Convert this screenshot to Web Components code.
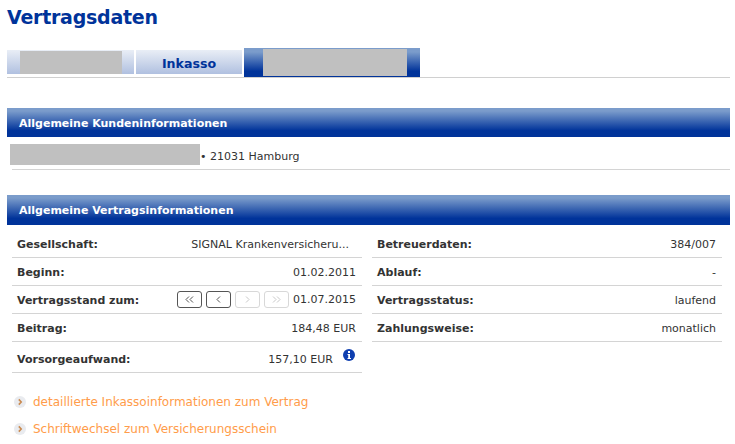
<!DOCTYPE html>
<html lang="de">
<head>
<meta charset="utf-8">
<title>Vertragsdaten</title>
<style>
    html, body { margin: 0; background: #fff; }
    body { font: 11px "DejaVu Sans", Verdana, sans-serif; color: #333; overflow: hidden; height: 444px; }
</style>
</head>
<body>
<template id="contract_page_tpl">
  <style>
      :host { display: block; padding: 0 5px 0 7px; }
      h1 { margin: 0; font-size: 19px; letter-spacing: -.25px; line-height: 24px; padding-top: 5px; color: #00339a; font-weight: bold; }
      .tabs { display: flex; align-items: flex-end; gap: 2px; height: 29px; margin-top: 19px; border-bottom: 1px solid #d0d0d0; }
      .columns { display: grid; grid-template-columns: 350px 350px; gap: 10px; padding: 5px 0 0 5px; }
      .address { display: flex; align-items: flex-start; box-sizing: border-box; height: 33px; padding-top: 7px; margin-left: 5px; border-bottom: 1px solid #d4d4d4; }
      .address .mask { width: 190px; height: 21px; background: #c0c0c0; margin-left: -2px; }
      .address .text { margin-top: 6px; }
      section-bar { margin-top: 30px; }
      section-bar.second { margin-top: 25px; height: 30px; }
      .links { padding-top: 15px; }
  </style>
  <h1>Vertragsdaten</h1>
  <div class="tabs">
    <tab-item style="width:127px" masked="102"></tab-item>
    <tab-item style="width:106px">Inkasso</tab-item>
    <tab-item style="width:176px" active masked="144"></tab-item>
  </div>
  <section-bar>Allgemeine Kundeninformationen</section-bar>
  <div class="address"><span class="mask"></span><span class="text">&bull; 21031 Hamburg</span></div>
  <section-bar class="second">Allgemeine Vertragsinformationen</section-bar>
  <div class="columns">
    <div>
      <info-row label="Gesellschaft:"><span style="padding-right:7px">SIGNAL Krankenversicheru...</span></info-row>
      <info-row label="Beginn:">01.02.2011</info-row>
      <info-row label="Vertragsstand zum:"><date-stepper></date-stepper><span style="margin-top:-3px">01.07.2015</span></info-row>
      <info-row label="Beitrag:">184,48 EUR</info-row>
      <info-row label="Vorsorgeaufwand:" tall>157,10 EUR<info-icon></info-icon></info-row>
    </div>
    <div>
      <info-row label="Betreuerdaten:">384/007</info-row>
      <info-row label="Ablauf:">-</info-row>
      <info-row label="Vertragsstatus:">laufend</info-row>
      <info-row label="Zahlungsweise:">monatlich</info-row>
    </div>
  </div>
  <div class="links">
    <more-link>detaillierte Inkassoinformationen zum Vertrag</more-link>
    <more-link>Schriftwechsel zum Versicherungsschein</more-link>
  </div>
</template>

<template id="tab_item_tpl">
  <style>
      :host { display: flex; box-sizing: border-box; height: 24px; margin-bottom: 3px; justify-content: center; align-items: center;
              background: linear-gradient(#e9eef6, #b0c0e0); color: #00339a; font-weight: bold; font-size: 12.6px; padding-top: 2px; }
      :host([active]) { height: 29px; margin-bottom: 0; padding-top: 0; align-items: flex-start; background: linear-gradient(#7b9ccb 0, #7b9ccb 4px, #00339a 80%); }
      .mask { background: #c0c0c0; height: 23px; align-self: flex-end; }
      :host([active]) .mask { height: 27px; margin: 1px 0 0 6px; align-self: flex-start; }
  </style>
  <slot></slot>
</template>

<template id="section_bar_tpl">
  <style>
      :host { display: block; box-sizing: border-box; height: 29px; padding: 0 12px; line-height: 32px;
              background: linear-gradient(#7b9ccb 0, #7b9ccb 3px, #00339a 78%); color: #fff; font-weight: bold; }
  </style>
  <slot></slot>
</template>

<template id="info_row_tpl">
  <style>
      :host { display: flex; box-sizing: border-box; height: 28px; align-items: center; justify-content: space-between;
              padding: 2px 6px 0 5px; border-bottom: 1px solid #d4d4d4; white-space: nowrap; }
      :host([tall]) { height: 31px; padding: 5px 7px 0 5px; }
      .label { font-weight: bold; }
      .value { display: flex; align-items: center; gap: 4px; }
  </style>
  <span class="label"></span>
  <span class="value"><slot></slot></span>
</template>

<template id="date_stepper_tpl">
  <style>
      :host { display: inline-flex; gap: 4px; margin-top: -2px; }
      span { box-sizing: border-box; width: 25px; height: 17px; border: 1px solid #555; border-radius: 3px; display: flex; align-items: center; justify-content: center; }
      .off { border-color: #d8d8d8; }
      svg { display: block; fill: none; stroke: #555; }
      .off svg { stroke: #c8c8c8; }
  </style>
  <span><svg width="9" height="7"><path d="M4 .5 1 3.5 4 6.5M8 .5 5 3.5 8 6.5"/></svg></span>
  <span><svg width="5" height="7"><path d="M4 .5 1 3.5 4 6.5"/></svg></span>
  <span class="off"><svg width="5" height="7"><path d="M1 .5 4 3.5 1 6.5"/></svg></span>
  <span class="off"><svg width="9" height="7"><path d="M1 .5 4 3.5 1 6.5M5 .5 8 3.5 5 6.5"/></svg></span>
</template>

<template id="info_icon_tpl">
  <style>
      :host { display: inline-block; width: 12px; height: 12px; margin: -10px 0 0 6px; }
      svg { display: block; }
  </style>
  <svg width="12" height="12" viewBox="0 0 12 12">
    <circle cx="6" cy="6" r="6" fill="#0f3fb0"/>
    <rect x="5" y="2" width="2" height="2" fill="#fff"/>
    <path d="M4.5 5H7V9H8V10H4.5V9H5.2V6H4.5Z" fill="#fff"/>
  </svg>
</template>

<template id="more_link_tpl">
  <style>
      :host { display: flex; align-items: center; gap: 7px; height: 27px; margin-left: 7px; font-size: 12px; color: #ff9c4a; }
      svg { display: block; flex: none; margin-top: 1px; }
  </style>
  <svg width="12" height="12" viewBox="0 0 12 12">
    <circle cx="6" cy="6" r="6" fill="#e9ebef"/>
    <path d="M4.8 3.4 7.2 6 4.8 8.6" fill="none" stroke="#c98a50" stroke-width="1.6"/>
  </svg>
  <slot></slot>
</template>

<contract-page></contract-page>

<script type="module">
    class TemplateElement extends HTMLElement {
        static templateId = '';
        constructor() {
            super();
            this.attachShadow({ mode: 'open' });
            const tpl = document.getElementById(this.constructor.templateId);
            this.shadowRoot.appendChild(tpl.content.cloneNode(true));
        }
    }

    class ContractPage extends TemplateElement { static templateId = 'contract_page_tpl'; }
    class SectionBar extends TemplateElement { static templateId = 'section_bar_tpl'; }
    class DateStepper extends TemplateElement { static templateId = 'date_stepper_tpl'; }
    class InfoIcon extends TemplateElement { static templateId = 'info_icon_tpl'; }
    class MoreLink extends TemplateElement { static templateId = 'more_link_tpl'; }

    class TabItem extends TemplateElement {
        static templateId = 'tab_item_tpl';
        connectedCallback() {
            // blanked out label in the screenshot
            const masked = this.getAttribute('masked');
            if (masked) {
                const mask = document.createElement('div');
                mask.className = 'mask';
                mask.style.width = `${masked}px`;
                this.shadowRoot.appendChild(mask);
            }
        }
    }

    class InfoRow extends TemplateElement {
        static templateId = 'info_row_tpl';
        connectedCallback() {
            this.shadowRoot.querySelector('.label').textContent = this.getAttribute('label');
        }
    }

    customElements.define('section-bar', SectionBar);
    customElements.define('date-stepper', DateStepper);
    customElements.define('info-icon', InfoIcon);
    customElements.define('more-link', MoreLink);
    customElements.define('tab-item', TabItem);
    customElements.define('info-row', InfoRow);
    customElements.define('contract-page', ContractPage);
</script>
</body>
</html>
